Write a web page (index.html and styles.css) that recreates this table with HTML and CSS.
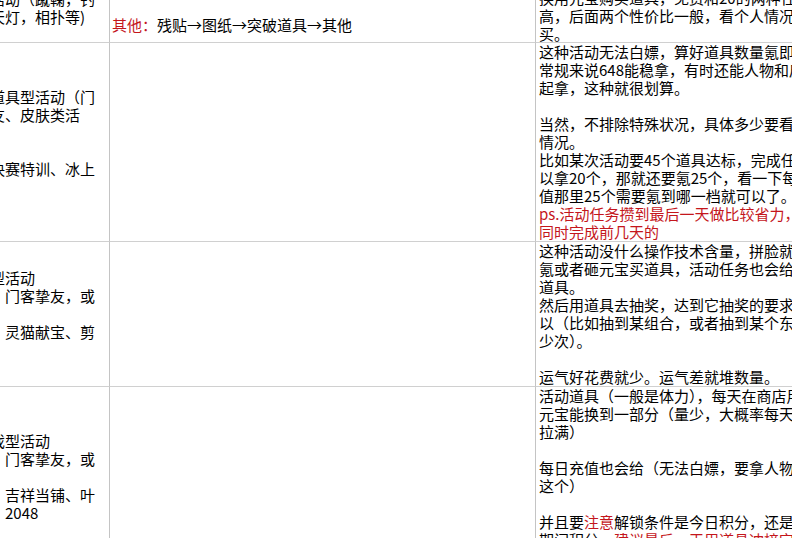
FILE: index.html
```html
<!DOCTYPE html>
<html>
	<head>
		<meta charset="UTF-8">
		<title>活动攻略</title>
		<link rel="stylesheet" href="styles.css">
	</head>
	<body>
		<div class="view">
			<div class="sheet">
				<!-- 第一行：节日活动 -->
				<div class="cell name first">一、节日玩法<br>季节活动（蹴鞠，钓<br>鱼、天灯，相扑等)</div>
				<div class="cell plan first"><div><span class="red">其他：</span>残贴→图纸→突破道具→其他</div></div>
				<div class="cell note first">这种活动可以用免费次数，也可以氪金或者<br>换用元宝购买道具，免费和20的两种性价比<br>高，后面两个性价比一般，看个人情况购<br>买。</div>

				<!-- 第二行：道具型 -->
				<div class="cell name"><div>二、道具型活动（门<br>客挚友、皮肤类活<br>动）<br>&nbsp;<br>如大决赛特训、冰上<br>等）</div></div>
				<div class="cell plan"></div>
				<div class="cell note">这种活动无法白嫖，算好道具数量氪即可，<br>常规来说648能稳拿，有时还能人物和皮肤一<br>起拿，这种就很划算。<br><br>当然，不排除特殊状况，具体多少要看活动<br>情况。<br>比如某次活动要45个道具达标，完成任务可<br>以拿20个，那就还要氪25个，看一下每日充<br>值那里25个需要氪到哪一档就可以了。<br><span class="red">ps.活动任务攒到最后一天做比较省力，可以<br>同时完成前几天的</span></div>

				<!-- 第三行：抽奖型 -->
				<div class="cell name"><div>抽奖型活动<br>（如：门客挚友，或<br>其他）<br>比如：灵猫献宝、剪<br>纸等）</div></div>
				<div class="cell plan"></div>
				<div class="cell note">这种活动没什么操作技术含量，拼脸就行，<br>氪或者砸元宝买道具，活动任务也会给一些<br>道具。<br>然后用道具去抽奖，达到它抽奖的要求就可<br>以（比如抽到某组合，或者抽到某个东西多<br>少次）。<br><br>运气好花费就少。运气差就堆数量。</div>

				<!-- 第四行：小游戏型 -->
				<div class="cell name"><div>小游戏型活动<br>（如：门客挚友，或<br>其他）<br>比如：吉祥当铺、叶<br>子戏、2048<br>等）</div></div>
				<div class="cell plan"></div>
				<div class="cell note">活动道具（一般是体力），每天在商店用<br>元宝能换到一部分（量少，大概率每天都能<br>拉满）<br><br>每日充值也会给（无法白嫖，要拿人物就要<br>这个）<br><br>并且要<span class="red">注意</span>解锁条件是今日积分，还是活动<br>期间积分，<span class="red">建议最后一天用道具冲榜完成。</span><br><br>&nbsp;</div>
			</div>
		</div>
	</body>
</html>
```

FILE: styles.css
```css
*{margin:0;padding:0;}
body{background:#fff; font-family:"Noto Sans CJK SC","Noto Sans",sans-serif; font-size:15px; color:#000;}
.view{width:792px; height:538px; overflow:hidden;}
.sheet{display:grid; grid-template-columns:152px 426px 420px; margin:-30px 0 0 -42px;}
.cell{
	box-sizing:border-box; border-right:1px solid #c4c4c4; border-bottom:1px solid #d0d0d0;
	line-height:18px; white-space:nowrap; overflow:hidden; padding:0 2px;
}
.first{height:73px;}
.name{display:flex; flex-direction:column; justify-content:center;}
.name.first{display:block; padding-top:2px;}
.plan.first{display:flex; flex-direction:column; justify-content:flex-end; padding-bottom:8px;}
.note{padding-left:3px;}
.note.first{padding-top:1px;}
.red{color:#c4161c;}
```
